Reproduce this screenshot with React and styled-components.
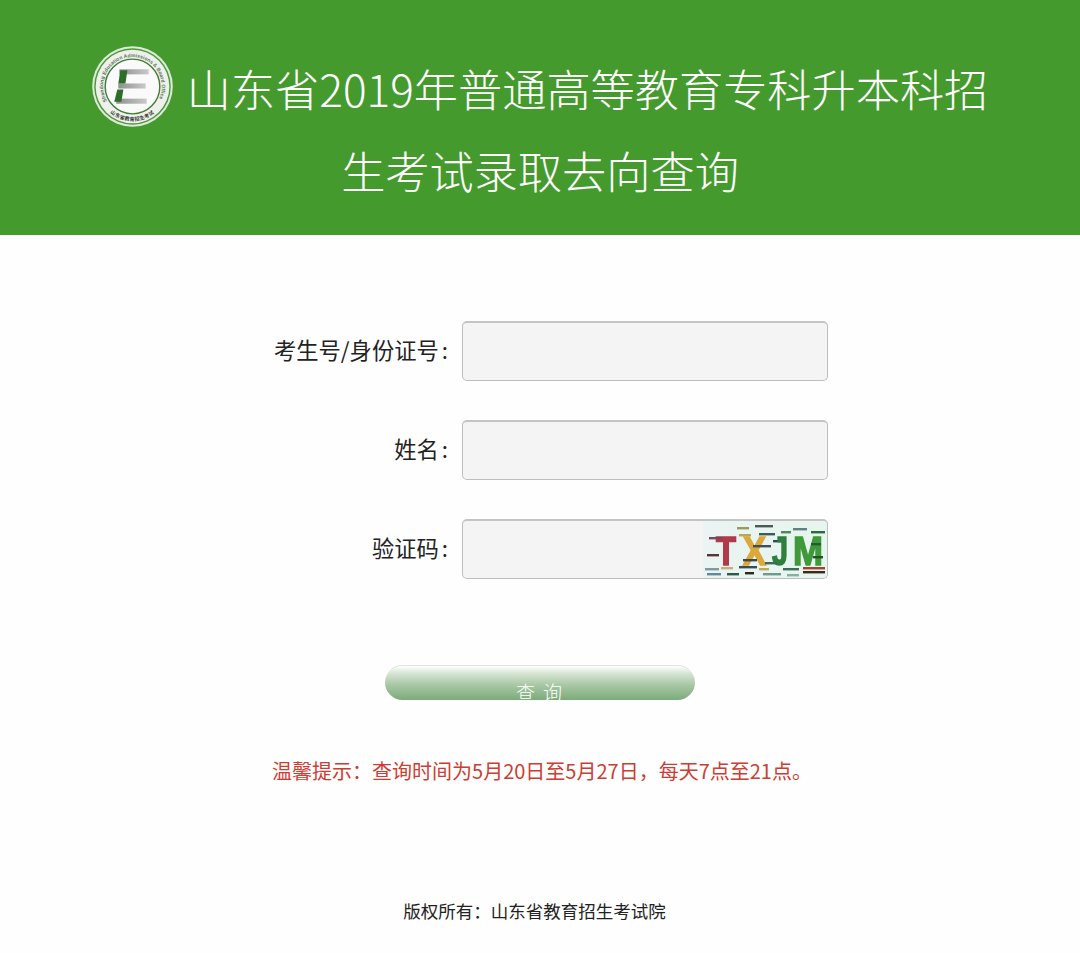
import React from 'react'
import styled, { createGlobalStyle } from 'styled-components'

const cjk = `"Noto Sans CJK SC", "Noto Sans", sans-serif`

const GlobalStyle = createGlobalStyle`
  html, body {
    margin: 0;
    padding: 0;
    background: #fefefe;
    font-family: ${cjk};
  }
`

const Page = styled.div`
  width: 1080px;
  height: 953px;
  overflow: hidden;
  display: flex;
  flex-direction: column;
`

const Header = styled.header`
  height: 235px;
  box-sizing: border-box;
  padding: 47px 80px 0;
  background: #459a2e;
`

const Title = styled.h1`
  margin: 0;
  color: #fff;
  font-size: 44.2px;
  font-weight: 300;
  line-height: 82px;
  text-align: center;
`

const LogoWrap = styled.svg`
  width: 81px;
  height: 81px;
  margin: -20px 14px -20px 0;
  vertical-align: middle;
  position: relative;
  top: -9px;
`

const Form = styled.form`
  display: flex;
  flex-direction: column;
  gap: 39px;
  margin: 0;
  padding-top: 86px;
`

const Row = styled.div`
  display: grid;
  grid-template-columns: 448px 366px;
  column-gap: 14px;
  align-items: center;
`

const Label = styled.label`
  color: #222;
  font-size: 22.3px;
  text-align: right;
  position: relative;
  top: -2px;
`

const Colon = styled.span`
  margin-left: 3px;
`

const FieldWrap = styled.div`
  position: relative;
  height: 60px;
`

const Input = styled.input`
  display: block;
  width: 100%;
  height: 100%;
  box-sizing: border-box;
  border: 1px solid #bdbdbd;
  border-top: 2px solid #c4c4c4;
  border-radius: 5px;
  background: #f4f4f4;
  outline: none;
`

const Captcha = styled.svg`
  position: absolute;
  top: 2px;
  right: 1px;
  width: 124px;
  height: 57px;
  border-radius: 0 5px 5px 0;
`

const Submit = styled.button`
  display: block;
  align-self: center;
  width: 310px;
  height: 35px;
  margin: 47px 0 0;
  padding: 8px 0 0;
  overflow: hidden;
  border: 0;
  border-top: 1px solid #e2e2e2;
  border-radius: 18px;
  background: linear-gradient(to bottom, #ffffff 0%, #d6e5d3 22%, #a9c8a6 55%, #7cab7b 100%);
  color: #fff;
  font-family: ${cjk};
  font-size: 19px;
  font-weight: 300;
  line-height: 36px;
  letter-spacing: 2px;
`

const Tip = styled.p`
  margin: 0;
  padding: 57px 0 0 4px;
  color: #cc3d33;
  font-size: 20px;
  line-height: 28px;
  text-align: center;
`

const Footer = styled.footer`
  margin-top: auto;
  padding: 0 11px 29px 0;
  color: #222;
  font-size: 17.5px;
  line-height: 26px;
  text-align: center;
`

// round seal of the exam authority
const Logo = () => (
  <LogoWrap viewBox="0 0 80 80">
    <defs>
      <path id="ringTop" d="M14.9 54.5a29 29 0 1 1 50.2 0" />
      <path id="ringBottom" d="M18 66a34 34 0 0 0 44 0" />
      <linearGradient id="barFill" x1="0" y1="0" x2="1" y2="0">
        <stop offset="0" stopColor="#8f8f8f" />
        <stop offset="1" stopColor="#c9c9c9" />
      </linearGradient>
      <filter id="sealBlur"><feGaussianBlur stdDeviation="0.5" /></filter>
    </defs>
    <circle cx="40" cy="40" r="39.8" fill="#dfe8dc" />
    <circle cx="40" cy="40" r="37.8" fill="#4b9a38" />
    <circle cx="40" cy="40" r="36.4" fill="#eef0ec" />
    <circle cx="40" cy="40" r="27" fill="#fafafa" stroke="#3e7d33" strokeWidth="1.4" />
    <text fontSize="5" fill="#5a7358" fontFamily='"Liberation Sans", sans-serif' fontWeight="700">
      <textPath href="#ringTop" textLength="118">Shandong Education Admissions &amp; Board Office</textPath>
    </text>
    <text fontSize="5" fill="#333" fontFamily={cjk} fontWeight="700">
      <textPath href="#ringBottom" textLength="52">山东省教育招生考试院</textPath>
    </text>
    <g filter="url(#sealBlur)">
      <rect x="27" y="23" width="29" height="5" fill="url(#barFill)" />
      <rect x="26" y="37" width="27" height="5" fill="url(#barFill)" />
      <rect x="24" y="52" width="30" height="5" fill="url(#barFill)" />
      <polygon points="28,24 35,24 33,37 26,37" fill="#2f6d2a" />
      <polygon points="25,43 31,43 29,55 22,55" fill="#2f6d2a" />
    </g>
  </LogoWrap>
)

const backNoise = [
  [34, 6, 12, '#9c9a5a'], [52, 4, 18, '#4d5a52'], [90, 7, 14, '#5f7f80'], [108, 10, 14, '#2f6a3c'],
  [36, 13, 12, '#b9a84e'], [56, 12, 16, '#3f5a58'], [78, 10, 10, '#4d8a5a'], [70, 19, 12, '#33495a'],
  [2, 47, 14, '#7f9aa0'], [80, 47, 16, '#3f6a58'], [100, 46, 22, '#a3432e'], [56, 47, 10, '#c2a85a'],
  [4, 52, 14, '#5f8a98'], [24, 52, 12, '#2f5a4a'], [42, 51, 9, '#2b2b1c'], [60, 52, 18, '#6a9a90'],
  [84, 53, 12, '#88b0a0'], [100, 50, 22, '#3a2a1a'], [18, 46, 12, '#c2b27a'], [36, 45, 18, '#34505a'],
]

const frontNoise = [
  [6, 16, 14, '#7a4a58'], [4, 33, 12, '#5a3038'], [50, 24, 18, '#3f5058'],
  [40, 38, 14, '#3a4a50'], [108, 22, 10, '#255a30'], [110, 35, 10, '#28502c'], [62, 41, 12, '#3f6a58'],
]

const CaptchaImage = () => (
  <Captcha viewBox="0 0 124 57">
    <defs>
      <linearGradient id="captchaFade" x1="0" y1="0" x2="1" y2="0">
        <stop offset="0" stopColor="#eaf4f2" />
        <stop offset="1" stopColor="#e6f5ee" />
      </linearGradient>
      <filter id="soft"><feGaussianBlur stdDeviation="0.7" /></filter>
    </defs>
    <rect width="124" height="57" fill="url(#captchaFade)" />
    <g filter="url(#soft)">
      {backNoise.map(([x, y, w, c], i) => (
        <rect key={i} x={x} y={y} width={w} height="2.4" fill={c} />
      ))}
      <g fontFamily='"Liberation Sans", sans-serif' fontWeight="700" fontSize="41" strokeWidth="1.6">
        <text x="13" y="44" fill="#b23a48" stroke="#b23a48" textLength="20" lengthAdjust="spacingAndGlyphs">T</text>
        <text x="40" y="44" fill="#dca83a" stroke="#dca83a" textLength="23" lengthAdjust="spacingAndGlyphs">X</text>
        <text x="69" y="44" fill="#2f7f3f" stroke="#2f7f3f" textLength="16" lengthAdjust="spacingAndGlyphs">J</text>
        <text x="90" y="44" fill="#3f9a3a" stroke="#3f9a3a" textLength="30" lengthAdjust="spacingAndGlyphs">M</text>
      </g>
      {frontNoise.map(([x, y, w, c], i) => (
        <rect key={i} x={x} y={y} width={w} height="2.4" fill={c} />
      ))}
    </g>
  </Captcha>
)

const App = () => {
  return (
    <Page>
      <GlobalStyle />
      <Header>
        <Title>
          <Logo />
          山东省2019年普通高等教育专科升本科招生考试录取去向查询
        </Title>
      </Header>
      <Form onSubmit={e => e.preventDefault()}>
        <Row>
          <Label>考生号/身份证号<Colon>:</Colon></Label>
          <FieldWrap><Input /></FieldWrap>
        </Row>
        <Row>
          <Label>姓名<Colon>:</Colon></Label>
          <FieldWrap><Input /></FieldWrap>
        </Row>
        <Row>
          <Label>验证码<Colon>:</Colon></Label>
          <FieldWrap>
            <Input />
            <CaptchaImage />
          </FieldWrap>
        </Row>
        <Submit type="submit">查 询</Submit>
      </Form>
      <Tip>温馨提示：查询时间为5月20日至5月27日，每天7点至21点。</Tip>
      <Footer>版权所有：山东省教育招生考试院</Footer>
    </Page>
  )
}

export default App
